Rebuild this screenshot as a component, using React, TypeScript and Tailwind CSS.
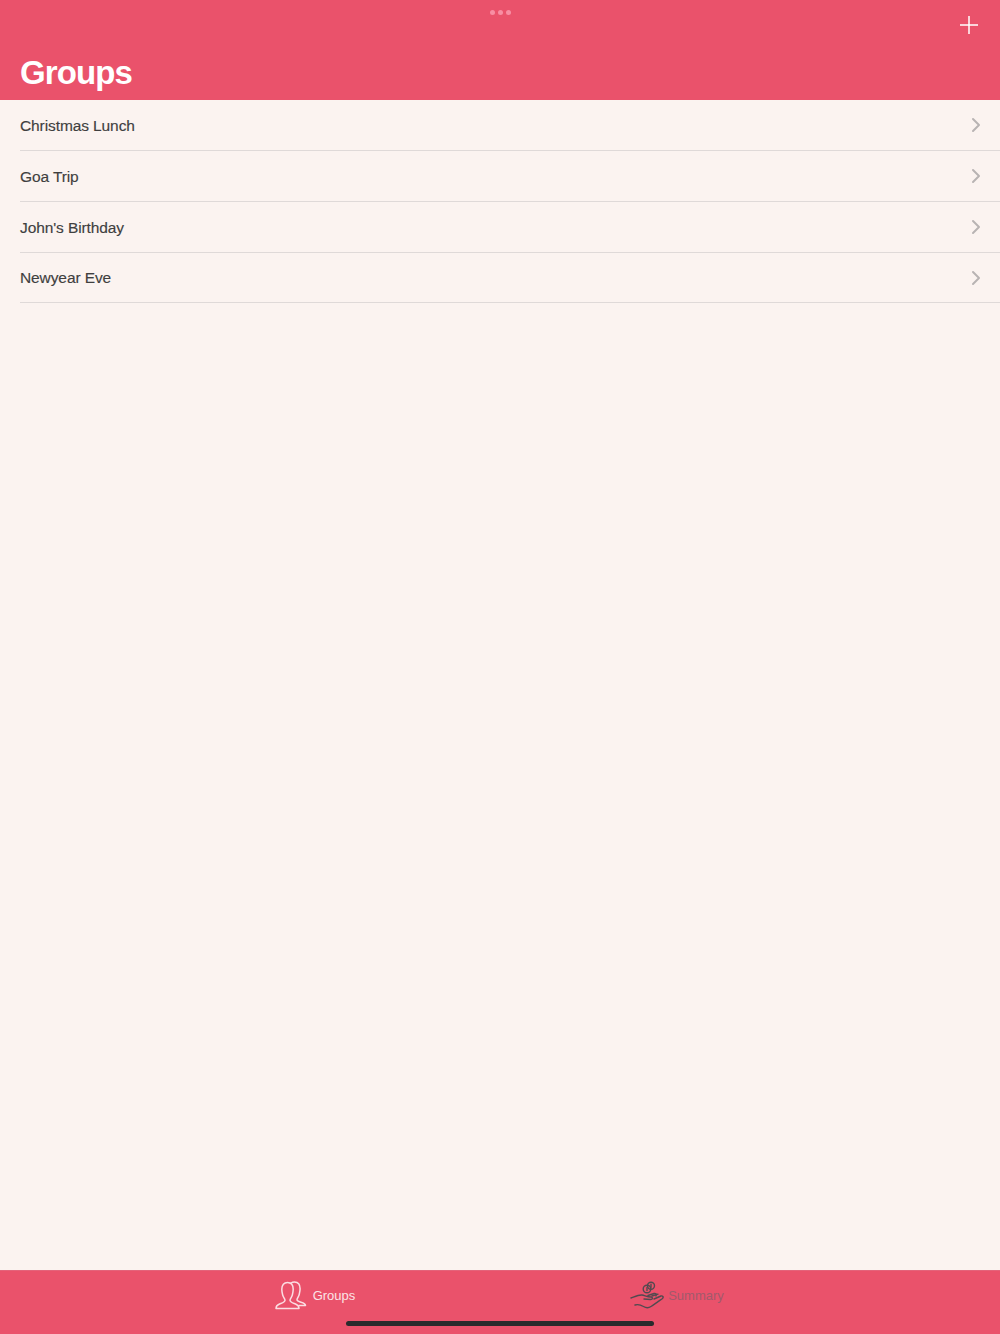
import React from "react";
import { ChevronRight } from "lucide-react";

const groups = ["Christmas Lunch", "Goa Trip", "John's Birthday", "Newyear Eve"];

function GroupsIcon() {
  return (
    <svg width="32" height="30" viewBox="0 0 32 30" fill="none" stroke="#fbdde2" strokeWidth="1.5" strokeLinejoin="round" strokeLinecap="round">
      <path d="M1 27.500c0-2.400 1-3.500 3.500-4.500 3-1.200 5.500-1.800 5.500-3.800 0-1.500-1.800-3-2.300-5.200C7.200 12 6.800 10.500 6.800 8.300 6.800 4 9 1.500 12.500 1.500s5.700 2.500 5.700 6.800c0 2.200-.4 3.700-.9 5.700-.5 2.200-2.300 3.700-2.300 5.200 0 2 2.500 2.600 5.500 3.800 2.500 1 3.500 2.100 3.500 4.500z" />
      <path d="M15.500 2.300C16.800 1.500 18.100 1 19.500 1c3.500 0 5.600 2.500 5.600 6.800 0 2.200-.4 3.700-.9 5.700-.5 2.200-2.200 3.700-2.200 5.200 0 1 1.300 1.700 4 2.500 2.600.8 4.500 1.500 4.500 3.300h-6.500" />
    </svg>
  );
}

function SummaryIcon() {
  return (
    <svg width="34" height="30" viewBox="0 0 34 30" fill="none" stroke="#524a50" strokeWidth="1.4" strokeLinecap="round" strokeLinejoin="round">
      <circle cx="17" cy="8" r="3.800" />
      <circle cx="21" cy="4.800" r="3.500" />
      <path d="M17 6.500v3M21 3.300v3" />
      <path d="M1 17c4-1.500 8-3.500 11-3 3 .5 5 2 9 2 2 0 2 2.500-.5 2.500L14 18" />
      <path d="M5 24c3-1 6 0 8.500 1.500 2.500 1.500 4.500 2 7.500 0 4-2.500 8-5.500 11.500-8 1.500-1.500 0-3-1.500-2.500L24 18" />
      <path d="M18 14.500l6-2c2-.5 3 .8 2 2.500M22 15l6-1.800" />
    </svg>
  );
}

export default function App() {
  return (
    <div className="relative flex h-[1334px] w-[1000px] flex-col overflow-hidden bg-[#fbf3f0] font-['Liberation_Sans',sans-serif]">
      <header className="flex h-[100px] flex-col bg-[#ea526b]">
        <div className="flex justify-center gap-[3px] pt-[10px]">
          <span className="size-[5px] rounded-full bg-[#f88ea3]" />
          <span className="size-[5px] rounded-full bg-[#f88ea3]" />
          <span className="size-[5px] rounded-full bg-[#f88ea3]" />
        </div>
        <div className="flex justify-end pr-[22px] pt-[1px]">
          <svg width="18" height="18" viewBox="0 0 18 18" stroke="#ffffff" strokeWidth="1.5">
            <path d="M9 0v18M0 9h18" />
          </svg>
        </div>
        <h1 className="pl-5 pt-[19px] text-[33px] leading-[40px] font-bold tracking-[-0.9px] text-white">Groups</h1>
      </header>

      <ul className="flex-1 pl-5">
        {groups.map((name) => (
          <li key={name} className="flex h-[51px] items-center justify-between border-b border-[#dfd9d8] pr-[12px] text-[15.5px] tracking-[-0.1px] text-[#3f3f3f] [-webkit-text-stroke:0.15px_#3f3f3f] last:h-[50px]">
            <span className="pt-[1px]">{name}</span>
            <ChevronRight size={24} strokeWidth={2} className="text-[#b8b3b3]" />
          </li>
        ))}
      </ul>

      <nav className="flex h-[64px] items-start border-t border-[#e4637a] bg-[#ea526b] pt-[10px]">
        <div className="flex w-1/2 justify-center pl-[130px]">
          <div className="flex items-center gap-[6px]">
            <GroupsIcon />
            <span className="text-[13px] text-[#fbe4e7]">Groups</span>
          </div>
        </div>
        <div className="flex w-1/2 justify-center pr-[146px]">
          <div className="flex items-center gap-[4px]">
            <SummaryIcon />
            <span className="text-[13px] text-[#a15a6b]">Summary</span>
          </div>
        </div>
      </nav>

      <div className="absolute bottom-[8px] left-[346px] h-[5px] w-[308px] rounded-full bg-[#2a2a2c]" />
    </div>
  );
}
